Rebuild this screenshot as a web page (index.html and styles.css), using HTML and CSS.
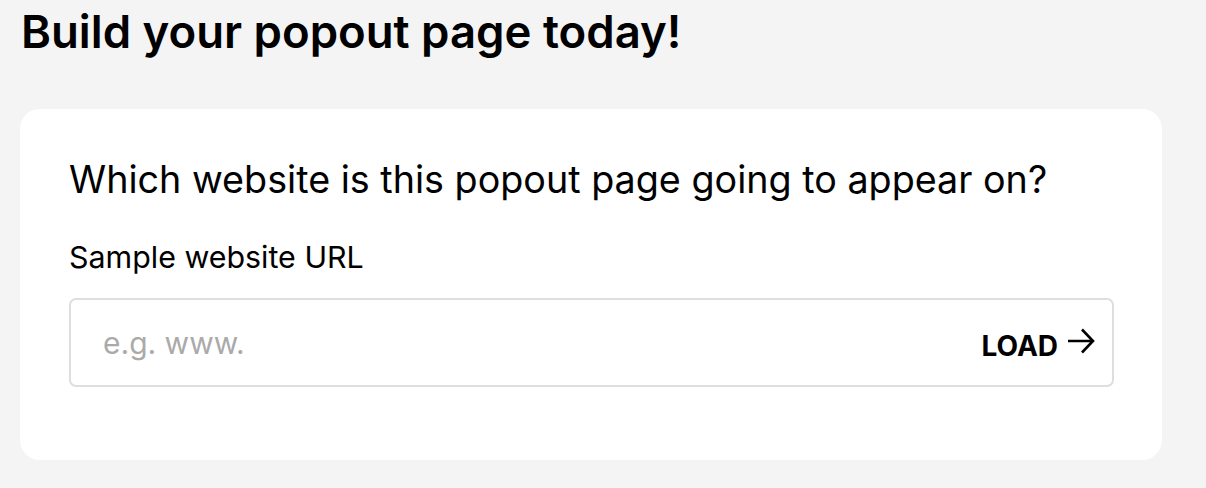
FILE: index.html
```html
<!DOCTYPE html>
<html lang="en">
<head>
<meta charset="utf-8">
<title>Build your popout page</title>
<link rel="stylesheet" href="styles.css">
</head>
<body>
<main class="page">
  <h1 class="title">Build your popout page today!</h1>
  <section class="card">
    <h2 class="question">Which website is this popout page going to appear on?</h2>
    <label class="label" for="url">Sample website URL</label>
    <div class="field">
      <input id="url" class="input" type="text" placeholder="e.g. www.">
      <button class="load" type="button"><span class="load-text">LOAD</span>
        <svg class="arrow" width="28" height="28" viewBox="0 0 28 28" aria-hidden="true"><path d="M1 14H26M15 2.5L26 14L15 25.5" fill="none" stroke="#000" stroke-width="2.6" stroke-linecap="butt" stroke-linejoin="miter"/></svg>
      </button>
    </div>
  </section>
</main>
</body>
</html>
```

FILE: styles.css
```css
html, body {
  margin: 0;
  padding: 0;
  background: #f4f4f4;
}
body {
  font-family: "Inter", "Liberation Sans", sans-serif;
  color: #000;
}
.page {
  padding: 4px 44px 0 20px;
}
.title {
  margin: 0 0 0 1px;
  font-size: 45.5px;
  font-weight: 600;
  line-height: 56px;
}
.card {
  margin-top: 49px;
  background: #fff;
  border-radius: 20px;
  padding: 47px 48px 73px 49px;
  display: flex;
  flex-direction: column;
}
.question {
  margin: 0;
  font-size: 37.7px;
  font-weight: 400;
  line-height: 46px;
}
.label {
  margin-top: 37px;
  font-size: 30.4px;
  line-height: 36px;
}
.field {
  box-sizing: border-box;
  margin-top: 23px;
  height: 89px;
  border: 2px solid #dedede;
  border-radius: 7px;
  display: flex;
  align-items: center;
  padding: 0 17px 0 32px;
}
.input {
  flex: 1;
  min-width: 0;
  border: 0;
  outline: none;
  background: transparent;
  font-family: inherit;
  font-size: 30px;
  color: #000;
  padding: 0;
}
.input::placeholder {
  color: #aaaaaa;
}
.load {
  display: flex;
  align-items: center;
  gap: 9px;
  border: 0;
  background: transparent;
  font-family: inherit;
  font-size: 28px;
  font-weight: 700;
  color: #000;
  padding: 0;
  cursor: pointer;
}
.load-text {
  margin-top: 7px;
}
.arrow {
  display: block;
  margin-top: -3px;
}
```
